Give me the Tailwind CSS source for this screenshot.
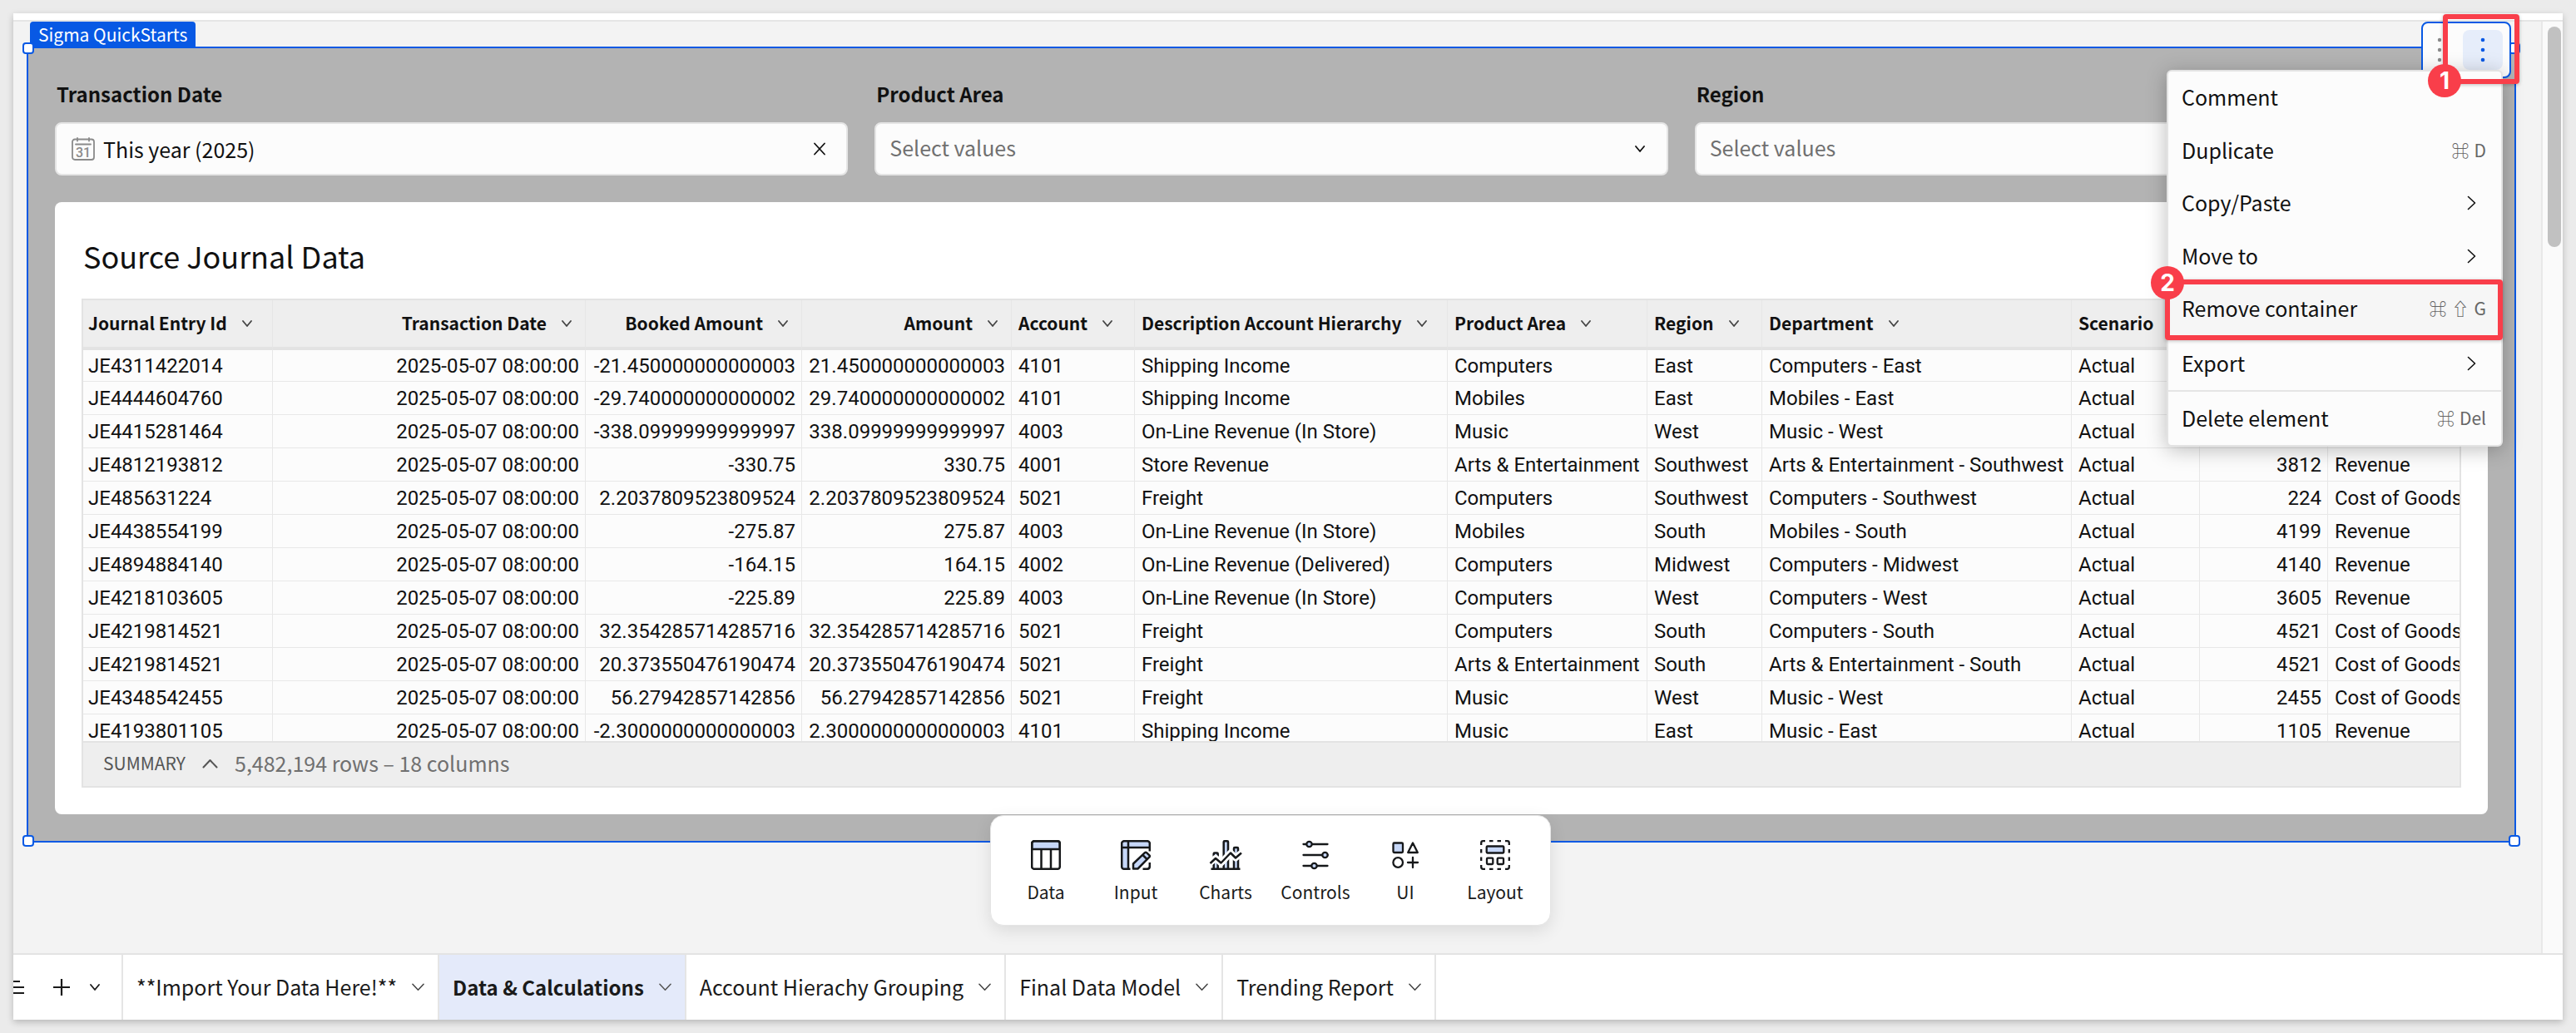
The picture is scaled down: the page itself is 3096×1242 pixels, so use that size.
<!DOCTYPE html>
<html lang="en">
<head>
<meta charset="utf-8">
<meta name="viewport" content="width=device-width, initial-scale=1">
<title>Sigma QuickStarts – Data &amp; Calculations</title>
<script src="https://cdn.jsdelivr.net/npm/@tailwindcss/browser@4"></script>
</head>
<body class="flex min-h-screen flex-col bg-[#ebebeb] p-4 font-['Noto_Sans_CJK_SC','Noto_Sans',sans-serif] text-[25px] text-[#111]">

<svg class="hidden">
  <symbol id="chev" viewBox="0 0 12 8"><path d="M1 1l5 6 5-6" fill="none" stroke="currentColor" stroke-width="1.8" stroke-linecap="round" stroke-linejoin="round"/></symbol>
  <symbol id="chev-thin" viewBox="0 0 16 10"><path d="M1 1l7 7.500 7-7.500" fill="none" stroke="currentColor" stroke-width="1.600" stroke-linecap="round" stroke-linejoin="round"/></symbol>
  <symbol id="chev-right" viewBox="0 0 11 18"><path d="M1.500 1.500l8 7.500-8 7.500" fill="none" stroke="currentColor" stroke-width="1.600" stroke-linecap="round" stroke-linejoin="round"/></symbol>
</svg>

<div class="flex flex-1 flex-col bg-white shadow-[0_3px_8px_rgba(0,0,0,0.22)]">
  <div class="h-2"></div>

  <main class="flex flex-1 border-t-2 border-[#e5e5e5] bg-[#f3f3f3]">
    <div class="relative min-w-0 flex-1 pt-[30px] pr-[30px] pb-[133px] pl-4">

      <!-- Selected container -->
      <section class="relative border-2 border-[#0859e4] bg-[#b3b3b3] px-8 pt-[39px] pb-8">
        <div class="absolute -top-8 left-0.5 h-8 rounded-t bg-[#0859e4] px-2.5 leading-[30px] text-[21px] text-white">Sigma QuickStarts</div>

        <div class="grid grid-cols-3 gap-8">
          <div class="flex flex-col gap-[18px]">
            <label for="date" class="pl-0.5 text-2xl leading-8 font-bold">Transaction Date</label>
            <div class="flex h-16 items-center rounded-lg border-2 border-[#e5e5e5] bg-[#fcfcfc] pr-5 pl-[18px]">
              <svg class="h-7 w-7 shrink-0 text-[#8a8a8a]" viewBox="0 0 28 28" fill="none" stroke="currentColor" stroke-width="1.800" stroke-linecap="round"><rect x="1" y="2.500" width="26" height="24.500" rx="3"/><path d="M5 8.500h18M7 1v3.500M21 1v3.500"/><text x="14" y="23.500" text-anchor="middle" font-family="Roboto, sans-serif" font-size="16" font-weight="500" fill="currentColor" stroke="none">31</text></svg>
              <input id="date" type="text" value="This year (2025)" class="ml-2.5 h-full min-w-0 flex-1 bg-transparent pb-px outline-none">
              <button type="button" aria-label="Clear" class="grid h-8 w-6 place-items-center"><svg class="h-4 w-4" viewBox="0 0 16 16" fill="none" stroke="currentColor" stroke-width="1.800" stroke-linecap="round"><path d="M2 1.500l12 13M14 1.500l-12 13"/></svg></button>
            </div>
          </div>
          <div class="flex flex-col gap-[18px]">
            <label for="area" class="pl-0.5 text-2xl leading-8 font-bold">Product Area</label>
            <div class="relative">
              <select id="area" class="h-16 w-full appearance-none rounded-lg border-2 border-[#e5e5e5] bg-[#fcfcfc] px-4 pb-0.5 text-[#707070] outline-none"><option>Select values</option></select>
              <svg class="pointer-events-none absolute top-7 right-7 h-2 w-3"><use href="#chev"/></svg>
            </div>
          </div>
          <div class="flex flex-col gap-[18px]">
            <label for="region" class="pl-0.5 text-2xl leading-8 font-bold">Region</label>
            <div class="relative">
              <select id="region" class="h-16 w-full appearance-none rounded-lg border-2 border-[#e5e5e5] bg-[#fcfcfc] px-4 pb-0.5 text-[#707070] outline-none"><option>Select values</option></select>
              <svg class="pointer-events-none absolute top-7 right-7 h-2 w-3"><use href="#chev"/></svg>
            </div>
          </div>
        </div>

        <!-- Table element -->
        <div class="mt-8 rounded-lg bg-white px-8 pt-10 pb-8">
          <h1 class="pl-0.5 text-4xl leading-[48px]">Source Journal Data</h1>
          <div class="mt-7 border-2 border-[#e3e3e3]">
            <div class="h-[530px] overflow-hidden bg-[#fcfcfc]">
              <table class="w-full table-fixed border-separate border-spacing-0">
                <colgroup>
                  <col class="w-[228px]"><col class="w-[376px]"><col class="w-[260px]"><col class="w-[252px]"><col class="w-[148px]"><col class="w-[376px]"><col class="w-[240px]"><col class="w-[138px]"><col class="w-[372px]"><col class="w-[154px]"><col class="w-[154px]"><col>
                </colgroup>
                <thead><tr id="head"></tr></thead>
                <tbody id="rows" class="font-[Roboto,sans-serif] text-2xl"></tbody>
              </table>
            </div>
            <div class="flex h-[54px] items-center gap-5 border-t-2 border-[#e3e3e3] bg-[#eee] pb-0.5 pl-6">
              <button type="button" class="flex items-center gap-5 text-[21px] text-[#555]">SUMMARY
                <svg class="h-3 w-[19px]" viewBox="0 0 19 12" fill="none" stroke="currentColor" stroke-width="2" stroke-linecap="round" stroke-linejoin="round"><path d="M1.500 10.500l8-8.500 8 8.500"/></svg>
              </button>
              <span class="text-[#707070]">5,482,194 rows – 18 columns</span>
            </div>
          </div>
        </div>

        <!-- Resize handles -->
        <span class="absolute -top-[7px] -left-[7px] h-3.5 w-3.5 rounded border-2 border-[#0859e4] bg-white"></span>
        <span class="absolute -top-[7px] -right-[7px] h-3.5 w-3.5 rounded border-2 border-[#0859e4] bg-white"></span>
        <span class="absolute -bottom-[7px] -left-[7px] h-3.5 w-3.5 rounded border-2 border-[#0859e4] bg-white"></span>
        <span class="absolute -right-[7px] -bottom-[7px] h-3.5 w-3.5 rounded border-2 border-[#0859e4] bg-white"></span>

        <!-- Element toolbar -->
        <div class="absolute -top-8 right-1 flex h-[68px] w-[108px] items-start justify-between rounded-lg border-2 border-[#0859e4] bg-[#fcfcfc] py-2 pr-2 pl-[13px]">
          <button type="button" aria-label="Drag" class="h-12 w-4"><svg class="h-12 w-4" viewBox="0 0 16 48" fill="#8a8a8a"><circle cx="7" cy="12" r="2.200"/><circle cx="7" cy="24" r="2.200"/><circle cx="7" cy="36" r="2.200"/></svg></button>
          <button type="button" aria-label="More" class="h-12 w-12 rounded-lg bg-[#e6edfa]"><svg class="h-12 w-12" viewBox="0 0 48 48" fill="#0859e4"><circle cx="24" cy="12" r="2.300"/><circle cx="24" cy="24" r="2.300"/><circle cx="24" cy="36" r="2.300"/></svg></button>
        </div>

        <!-- Context menu -->
        <div role="menu" class="absolute top-[26px] right-3.5 flex h-[453px] w-[404px] flex-col rounded-md border-2 border-[#e3e3e3] bg-[#fcfcfc] shadow-[0_4px_24px_rgba(0,0,0,0.25)]">
          <button role="menuitem" type="button" class="flex flex-1 items-center justify-between px-4 pb-0.5">Comment</button>
          <button role="menuitem" type="button" class="flex flex-1 items-center justify-between pr-[18px] pb-0.5 pl-4">Duplicate<span class="flex gap-1.5 text-[21px] text-[#666]"><span class="font-medium">⌘</span><span>D</span></span></button>
          <button role="menuitem" type="button" class="flex flex-1 items-center justify-between pr-[30px] pb-0.5 pl-4">Copy/Paste<svg class="h-[18px] w-[11px]"><use href="#chev-right"/></svg></button>
          <button role="menuitem" type="button" class="flex flex-1 items-center justify-between pr-[30px] pb-0.5 pl-4">Move to<svg class="h-[18px] w-[11px]"><use href="#chev-right"/></svg></button>
          <button role="menuitem" type="button" class="relative flex flex-1 items-center justify-between bg-[#f6f6f6] pr-[18px] pb-0.5 pl-4">Remove container<span class="flex gap-1.5 text-[21px] text-[#666]"><span class="font-medium">⌘</span><span class="font-medium">⇧</span><span>G</span></span>
            <span class="absolute -top-1 -right-0.5 -bottom-[5px] -left-1 rounded-sm border-6 border-[#f93e4a] shadow-[0_1px_4px_rgba(0,0,0,0.25)]"></span>
            <span class="absolute -top-5 -left-[21px] grid h-10 w-10 place-items-center rounded-full bg-[#f93e4a] font-[Inter,sans-serif] text-[28px] leading-none font-bold text-white">2</span>
          </button>
          <div class="h-0.5 bg-[#e5e5e5]"></div>
          <button role="menuitem" type="button" class="flex flex-1 items-center justify-between pr-[30px] pb-0.5 pl-4">Export<svg class="h-[18px] w-[11px]"><use href="#chev-right"/></svg></button>
          <div class="h-0.5 bg-[#e5e5e5]"></div>
          <button role="menuitem" type="button" class="flex flex-1 items-center justify-between pr-[18px] pb-0.5 pl-4">Delete element<span class="flex gap-1.5 text-[21px] text-[#666]"><span class="font-medium">⌘</span><span>Del</span></span></button>
        </div>

        <!-- Step marker 1 -->
        <div class="pointer-events-none absolute -top-[41px] -right-1.5 h-[84px] w-[92px] rounded-sm border-6 border-[#f93e4a] shadow-[0_1px_4px_rgba(0,0,0,0.25)]">
          <span class="absolute -bottom-[22px] -left-6 grid h-10 w-10 place-items-center rounded-full bg-[#f93e4a] font-[Inter,sans-serif] text-[28px] leading-none font-bold text-white">1</span>
        </div>
      </section>

      <!-- Add-element bar -->
      <div class="pointer-events-none absolute right-8 bottom-[33px] left-4 flex justify-center">
        <div class="pointer-events-auto grid h-[133px] grid-cols-6 rounded-2xl border border-[#e5e5e5] bg-white px-3 pt-[29px] text-[21px] leading-7 text-[#1a1a1a] shadow-[0_6px_20px_rgba(0,0,0,0.1)]">
          <button type="button" class="flex w-[108px] flex-col items-center gap-3">
            <svg class="h-9 w-9" viewBox="0 0 36 36" fill="none" stroke="#16181a" stroke-width="2.500"><path d="M1.200 11V4a2.800 2.800 0 0 1 2.800-2.800h28A2.800 2.800 0 0 1 34.800 4v7z" fill="#c6d7f8"/><rect x="1.200" y="1.200" width="33.600" height="33.600" rx="2.800"/><path d="M12.500 11v24M24 11v24"/></svg>Data</button>
          <button type="button" class="flex w-[108px] flex-col items-center gap-3">
            <svg class="h-9 w-9" viewBox="0 0 36 36" fill="none" stroke="#16181a" stroke-width="2.500"><path d="M34.800 9V4A2.800 2.800 0 0 0 32 1.200H4A2.800 2.800 0 0 0 1.200 4v28A2.800 2.800 0 0 0 4 34.800h5V9z" fill="#c6d7f8" stroke="none"/><path d="M34.800 13.500V4A2.800 2.800 0 0 0 32 1.200H4A2.800 2.800 0 0 0 1.200 4v28A2.800 2.800 0 0 0 4 34.800h7.500M1.200 9h33.600M9 1.200v33.600"/><path d="M15 34.500v-6L29 15.200q1-.8 2 0l3.400 3.200q.9 1 0 2L20.500 34.500z" fill="#c6d7f8" stroke-linejoin="round"/><path d="M26.300 17.800l5.200 5.200"/><path d="M34.800 27v4.500q0 3.300-3.300 3.300h-5"/></svg>Input</button>
          <button type="button" class="flex w-[108px] flex-col items-center gap-3">
            <svg class="h-9 w-9 overflow-visible" viewBox="0 0 36 36" fill="none" stroke="#16181a" stroke-width="2.500" stroke-linejoin="round"><path d="M3.700 34.500V16.500q0-1 1-1h3q1 0 1 1v18M15.700 34.500V2.300q0-1 1-1h3.300q1 0 1 1v32.200M28 34.500V10q0-1 1-1h3q1 0 1 1v24.500" fill="#c6d7f8"/><path d="M-1 27.500L6 21.800l6.500 5.700L24 15.500l6 6 7-6" stroke="#fff" stroke-width="8"/><path d="M-.5 28L6 22l6.500 5.500L24 15.500l6 6 7-6M.5 34.800h35" stroke-width="2.500"/></svg>Charts</button>
          <button type="button" class="flex w-[108px] flex-col items-center gap-3">
            <svg class="h-9 w-9" viewBox="0 0 36 36" fill="#c6d7f8" stroke="#16181a" stroke-width="2.300" stroke-linecap="round"><path d="M3.500 5h29M3.500 18h29M3.500 31h29"/><circle cx="10.500" cy="5" r="3.200"/><circle cx="29.500" cy="18" r="3.200"/><circle cx="16.500" cy="31" r="3.200"/></svg>Controls</button>
          <button type="button" class="flex w-[108px] flex-col items-center gap-3">
            <svg class="h-9 w-9" viewBox="0 0 36 36" fill="none" stroke="#16181a" stroke-width="2.300" stroke-linecap="round" stroke-linejoin="round"><rect x="3.500" y="3.500" width="11.500" height="11.500" rx="1.200" fill="#c6d7f8"/><path d="M27 3.500l5.800 11.500H21.200zM27 21v12M21 27h12"/><circle cx="9.200" cy="27" r="5.800"/></svg>UI</button>
          <button type="button" class="flex w-[108px] flex-col items-center gap-3">
            <svg class="h-9 w-9" viewBox="0 0 36 36" fill="none" stroke="#16181a" stroke-width="2.300"><path d="M1.200 6V3.500q0-2.300 2.300-2.300H6M30 1.200h2.500q2.300 0 2.300 2.300V6M34.800 30v2.500q0 2.300-2.300 2.300H30M6 34.800H3.500q-2.300 0-2.300-2.300V30M11 1.200h4.500M20.500 1.200H25M11 34.800h4.500M20.500 34.800H25M1.200 11v4.500M1.200 20.500V25M34.800 11v4.500M34.800 20.500V25"/><rect x="7.700" y="7.500" width="20.600" height="8" rx="1" fill="#c6d7f8"/><rect x="8" y="21.700" width="7.300" height="7.300" rx="1"/><rect x="20.700" y="21.700" width="7.300" height="7.300" rx="1"/></svg>Layout</button>
        </div>
      </div>
    </div>

    <!-- Scroll track -->
    <div class="w-[26px] border-l-2 border-[#e8e8e8] bg-[#fafafa] pt-1.5 pl-1.5">
      <div class="h-[265px] w-4 rounded-full bg-[#c1c1c1]"></div>
    </div>
  </main>

  <!-- Page tabs -->
  <nav class="flex h-20 border-t-2 border-[#e3e3e3] text-[#1a1a1a]">
    <div class="flex w-[132px] items-center justify-between border-r-2 border-[#e5e5e5] pr-[26px]">
      <button type="button" aria-label="Pages"><svg class="h-5 w-3.5" viewBox="0 0 14 20" stroke="currentColor" stroke-width="2.200"><path d="M0 3h8M0 10h13M0 17h13"/></svg></button>
      <button type="button" aria-label="Add page" class="ml-2.5"><svg class="h-5 w-5" viewBox="0 0 20 20" stroke="currentColor" stroke-width="2.200"><path d="M10 0v20M0 10h20"/></svg></button>
      <button type="button" aria-label="More pages"><svg class="h-2 w-3"><use href="#chev"/></svg></button>
    </div>
    <button type="button" class="flex items-center gap-[18px] border-r-2 border-[#e5e5e5] px-4">**Import Your Data Here!**<svg class="h-2.5 w-[15px] text-[#444]"><use href="#chev-thin"/></svg></button>
    <button type="button" class="flex items-center gap-[18px] border-r-2 border-[#e5e5e5] bg-[#e4eafa] px-4 text-2xl font-bold">Data &amp; Calculations<svg class="h-2.5 w-[15px] text-[#555]"><use href="#chev-thin"/></svg></button>
    <button type="button" class="flex items-center gap-[18px] border-r-2 border-[#e5e5e5] px-4">Account Hierachy Grouping<svg class="h-2.5 w-[15px] text-[#444]"><use href="#chev-thin"/></svg></button>
    <button type="button" class="flex items-center gap-[18px] border-r-2 border-[#e5e5e5] px-4">Final Data Model<svg class="h-2.5 w-[15px] text-[#444]"><use href="#chev-thin"/></svg></button>
    <button type="button" class="flex items-center gap-[18px] border-r-2 border-[#e5e5e5] px-4">Trending Report<svg class="h-2.5 w-[15px] text-[#444]"><use href="#chev-thin"/></svg></button>
  </nav>
</div>

<script>
const columns = ['Journal Entry Id', 'Transaction Date', 'Booked Amount', 'Amount', 'Account', 'Description Account Hierarchy', 'Product Area', 'Region', 'Department', 'Scenario', '', ''];
const right = new Set([1, 2, 3, 10]);
const date = '2025-05-07 08:00:00';
const rows = [
  ['JE4311422014', '-21.450000000000003', '21.450000000000003', '4101', 'Shipping Income', 'Computers', 'East', '2014', 'Revenue'],
  ['JE4444604760', '-29.740000000000002', '29.740000000000002', '4101', 'Shipping Income', 'Mobiles', 'East', '4760', 'Revenue'],
  ['JE4415281464', '-338.09999999999997', '338.09999999999997', '4003', 'On-Line Revenue (In Store)', 'Music', 'West', '1464', 'Revenue'],
  ['JE4812193812', '-330.75', '330.75', '4001', 'Store Revenue', 'Arts & Entertainment', 'Southwest', '3812', 'Revenue'],
  ['JE485631224', '2.2037809523809524', '2.2037809523809524', '5021', 'Freight', 'Computers', 'Southwest', '224', 'Cost of Goods Sold'],
  ['JE4438554199', '-275.87', '275.87', '4003', 'On-Line Revenue (In Store)', 'Mobiles', 'South', '4199', 'Revenue'],
  ['JE4894884140', '-164.15', '164.15', '4002', 'On-Line Revenue (Delivered)', 'Computers', 'Midwest', '4140', 'Revenue'],
  ['JE4218103605', '-225.89', '225.89', '4003', 'On-Line Revenue (In Store)', 'Computers', 'West', '3605', 'Revenue'],
  ['JE4219814521', '32.354285714285716', '32.354285714285716', '5021', 'Freight', 'Computers', 'South', '4521', 'Cost of Goods Sold'],
  ['JE4219814521', '20.373550476190474', '20.373550476190474', '5021', 'Freight', 'Arts & Entertainment', 'South', '4521', 'Cost of Goods Sold'],
  ['JE4348542455', '56.27942857142856', '56.27942857142856', '5021', 'Freight', 'Music', 'West', '2455', 'Cost of Goods Sold'],
  ['JE4193801105', '-2.3000000000000003', '2.3000000000000003', '4101', 'Shipping Income', 'Music', 'East', '1105', 'Revenue'],
];
const esc = s => s.replace(/&/g, '&amp;');

document.getElementById('head').innerHTML = columns.map((c, i) =>
  `<th class="h-[58px] border-r border-b-2 border-r-[#e6e6e6] border-b-[#e3e3e3] bg-[#eee] p-0 text-[21px] font-bold last:border-r-0"><span class="flex items-center gap-[18px] whitespace-nowrap ${right.has(i) ? 'justify-end pr-4' : i ? 'pl-2' : 'pl-1.5'}">${c}${c ? '<svg class="h-2 w-3 text-[#444]"><use href="#chev"/></svg>' : ''}</span></th>`).join('');

document.getElementById('rows').innerHTML = rows.map(([id, booked, amount, account, desc, area, region, num, type]) => {
  const cells = [id, date, booked, amount, account, desc, area, region, area + ' - ' + region, 'Actual', num, type];
  return '<tr class="group">' + cells.map((c, i) =>
    `<td class="h-10 overflow-hidden border-r border-b border-[#e8e8e8] p-0 leading-9 whitespace-nowrap group-first:border-t-2 group-first:border-t-[#e3e3e3] last:border-r-0 ${right.has(i) ? 'pr-[7px] text-right' : i ? 'pl-2' : 'pl-1.5'}">${esc(c)}</td>`).join('') + '</tr>';
}).join('');
</script>
</body>
</html>
